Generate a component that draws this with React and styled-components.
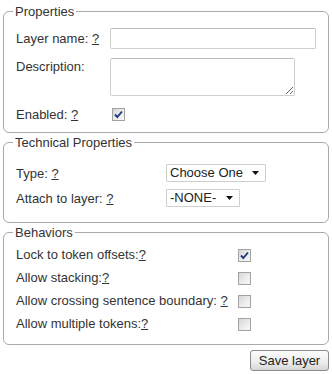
import styled, { createGlobalStyle } from 'styled-components';

const GlobalStyle = createGlobalStyle`
  body {
    margin: 0;
    background: #fff;
    font-family: "Liberation Sans", Arial, sans-serif;
    font-size: 13px;
    color: #333;
  }
`;

const Page = styled.form`
  padding: 4px 3px 0 3px;
  display: flex;
  flex-direction: column;
`;

const Fieldset = styled.fieldset`
  margin: ${props => props.$mt || 0}px 0 0 0;
  padding: ${props => props.$pt}px 12px ${props => props.$pb}px 12px;
  border: 1px solid #a9a9a9;
  border-radius: 6px;
  min-width: 0;
  display: flex;
  flex-direction: column;
  gap: ${props => props.$gap || 0}px;
`;

const Legend = styled.legend`
  padding: 0 2px;
  margin-left: -3px;
  line-height: 15px;
  font-size: 13px;
  color: #333;
`;

const Row = styled.div`
  display: flex;
  align-items: ${props => props.$align || 'center'};
  height: ${props => props.$h}px;
`;

const Label = styled.label`
  flex: 0 0 ${props => props.$w}px;
  line-height: 15px;
  white-space: nowrap;
  padding-top: ${props => props.$pt || 0}px;
`;

const Help = styled.a`
  color: #333;
  text-decoration: underline;
  cursor: help;
`;

const TextInput = styled.input`
  box-sizing: border-box;
  width: 209px;
  height: 21px;
  margin: 0;
  border: 1px solid #cfcfcf;
  border-top-color: #bdbdbd;
  border-radius: 2px;
  padding: 0 3px;
  font: inherit;
`;

const TextArea = styled.textarea`
  box-sizing: border-box;
  width: 185px;
  height: 38px;
  margin: 0;
  border: 1px solid #cfcfcf;
  border-top-color: #bdbdbd;
  border-radius: 2px;
  padding: 2px 3px;
  font: inherit;
`;

const Check = styled.span`
  box-sizing: border-box;
  display: inline-flex;
  align-items: center;
  justify-content: center;
  width: 13px;
  height: 13px;
  margin: ${props => props.$mt || 0}px 0 0 ${props => props.$ml || 0}px;
  border: 1px solid #a3a3a3;
  background: linear-gradient(135deg, #d6d6d6 0%, #ececec 55%, #f7f7f7 100%);
`;

const SelectWrap = styled.span`
  position: relative;
  display: inline-flex;
`;

const Select = styled.select`
  appearance: none;
  -webkit-appearance: none;
  box-sizing: border-box;
  height: 18px;
  margin: 0;
  padding: 0 22px 0 3px;
  border: 1px solid #cfcfcf;
  border-radius: 1px;
  background: #fff;
  color: #222;
  font: inherit;
  line-height: 16px;
`;

const Arrow = styled.svg`
  position: absolute;
  right: 7px;
  top: 7px;
  pointer-events: none;
`;

const Actions = styled.div`
  display: flex;
  justify-content: flex-end;
  margin-top: 5px;
`;

const Button = styled.button`
  box-sizing: border-box;
  height: 21px;
  width: 79px;
  padding: 0;
  border: 1px solid #8a8a8a;
  border-radius: 3px;
  background: linear-gradient(#fdfdfd 0%, #ececec 60%, #d6d6d6 100%);
  color: #222;
  font: inherit;
  font-size: 13px;
`;

const CheckBox = ({ checked, ml, mt }) => (
  <Check $ml={ml} $mt={mt}>
    {checked && (
      <svg width="9" height="9" viewBox="0 0 9 9">
        <path d="M1 4.5 L3.3 7 L8 1.5" fill="none" stroke="#243a86" strokeWidth="1.9" />
      </svg>
    )}
  </Check>
);

const Dropdown = ({ options }) => (
  <SelectWrap>
    <Select defaultValue={options[0]}>
      {options.map(o => (
        <option key={o}>{o}</option>
      ))}
    </Select>
    <Arrow width="7" height="4" viewBox="0 0 7 4">
      <path d="M0 0 H7 L3.5 4 Z" fill="#111" />
    </Arrow>
  </SelectWrap>
);

const behaviors = [
  { label: 'Lock to token offsets:', space: false, checked: true },
  { label: 'Allow stacking:', space: false, checked: false },
  { label: 'Allow crossing sentence boundary:', space: true, checked: false },
  { label: 'Allow multiple tokens:', space: false, checked: false },
];

export default function App() {
  return (
    <>
      <GlobalStyle />
      <Page onSubmit={e => e.preventDefault()}>
        <Fieldset $pt={9} $pb={9} $gap={9}>
          <Legend>Properties</Legend>
          <Row $h={21}>
            <Label $w={94}>
              Layer name: <Help>?</Help>
            </Label>
            <TextInput type="text" />
          </Row>
          <Row $h={38} $align="flex-start">
            <Label $w={94} $pt={1}>Description:</Label>
            <TextArea />
          </Row>
          <Row $h={18}>
            <Label $w={94}>
              Enabled: <Help>?</Help>
            </Label>
            <CheckBox checked ml={2} />
          </Row>
        </Fieldset>

        <Fieldset $mt={2} $pt={11} $pb={12} $gap={1}>
          <Legend>Technical Properties</Legend>
          <Row $h={24}>
            <Label $w={150}>
              Type: <Help>?</Help>
            </Label>
            <Dropdown options={['Choose One']} />
          </Row>
          <Row $h={24}>
            <Label $w={150}>
              Attach to layer: <Help>?</Help>
            </Label>
            <Dropdown options={['-NONE-']} />
          </Row>
        </Fieldset>

        <Fieldset $mt={2} $pt={3} $pb={9}>
          <Legend>Behaviors</Legend>
          {behaviors.map(b => (
            <Row key={b.label} $h={23}>
              <Label $w={221}>
                {b.label}
                {b.space ? ' ' : ''}
                <Help>?</Help>
              </Label>
              <CheckBox checked={b.checked} ml={1} mt={2} />
            </Row>
          ))}
        </Fieldset>

        <Actions>
          <Button type="submit">Save layer</Button>
        </Actions>
      </Page>
    </>
  );
}
